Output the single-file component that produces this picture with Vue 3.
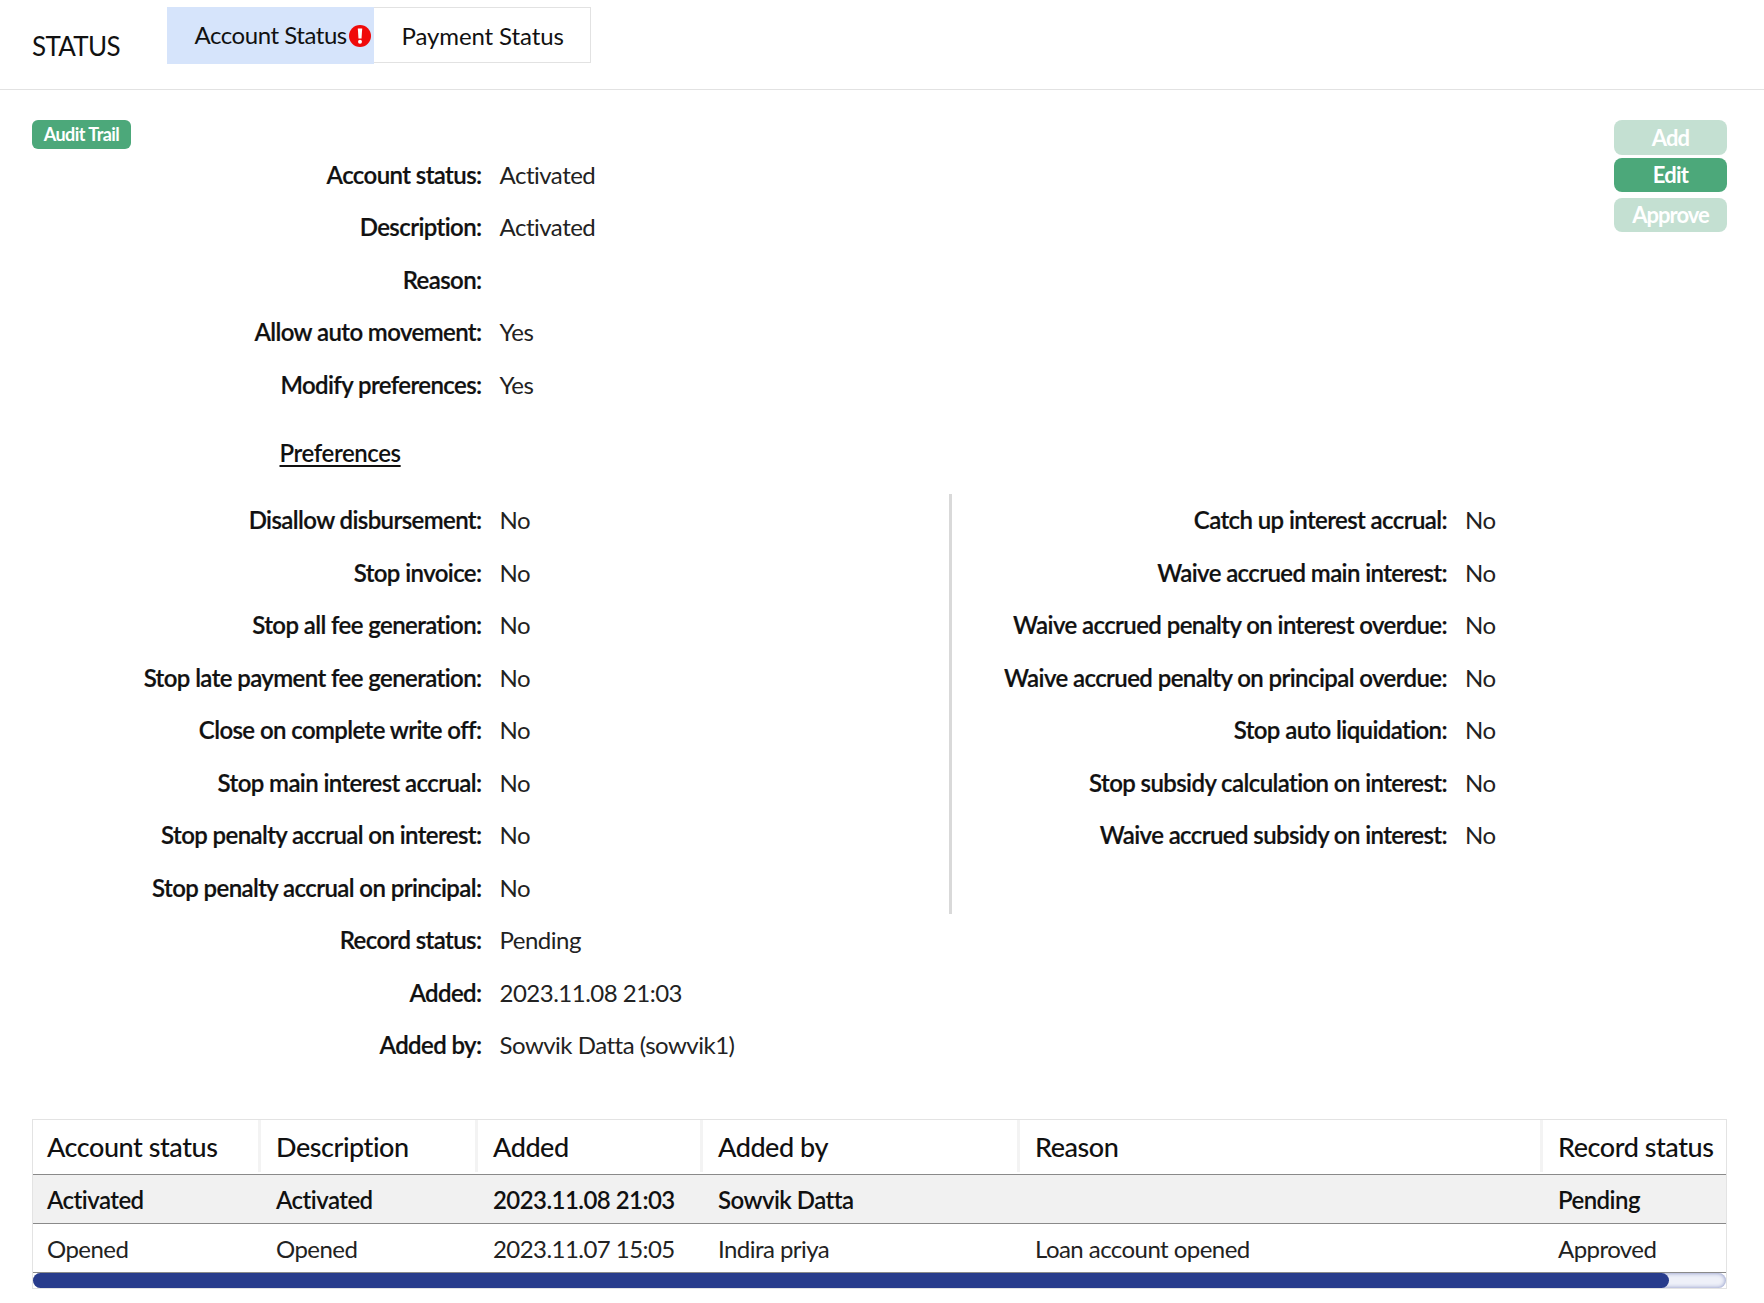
<script setup>
const top = [
  ['Account status:', 'Activated'],
  ['Description:', 'Activated'],
  ['Reason:', ''],
  ['Allow auto movement:', 'Yes'],
  ['Modify preferences:', 'Yes'],
]
const left = ['Disallow disbursement:', 'Stop invoice:', 'Stop all fee generation:', 'Stop late payment fee generation:', 'Close on complete write off:', 'Stop main interest accrual:', 'Stop penalty accrual on interest:', 'Stop penalty accrual on principal:']
const right = ['Catch up interest accrual:', 'Waive accrued main interest:', 'Waive accrued penalty on interest overdue:', 'Waive accrued penalty on principal overdue:', 'Stop auto liquidation:', 'Stop subsidy calculation on interest:', 'Waive accrued subsidy on interest:']
const bottom = [
  ['Record status:', 'Pending'],
  ['Added:', '2023.11.08 21:03'],
  ['Added by:', 'Sowvik Datta (sowvik1)'],
]
const cols = ['Account status', 'Description', 'Added', 'Added by', 'Reason', 'Record status']
const rows = [
  ['Activated', 'Activated', '2023.11.08 21:03', 'Sowvik Datta', '', 'Pending'],
  ['Opened', 'Opened', '2023.11.07 15:05', 'Indira priya', 'Loan account opened', 'Approved'],
]
</script>

<template>
  <div class="page">
    <header class="head">
      <h1 class="title">STATUS</h1>
      <nav class="tabs">
        <div class="tab active">
          <span class="tab-text">Account Status</span>
          <svg class="alert" viewBox="0 0 22 22" width="22" height="22">
            <circle cx="11" cy="11" r="11" fill="#f00a0a" />
            <path d="M8.8 3.5h4.4l-.7 10h-3z" fill="#fff" />
            <circle cx="11" cy="16.8" r="2" fill="#fff" />
          </svg>
        </div>
        <div class="tab"><span class="tab-text">Payment Status</span></div>
      </nav>
    </header>

    <main class="body">
      <section class="content">
        <div class="main">
          <button class="audit">Audit Trail</button>
          <div class="form">
            <div v-for="r in top" :key="r[0]" class="row">
              <label class="lab">{{ r[0] }}</label><span class="val">{{ r[1] }}</span>
            </div>
            <div class="prefs"><span>Preferences</span></div>
            <div class="split">
              <div class="col-left">
                <div v-for="l in left" :key="l" class="row">
                  <label class="lab">{{ l }}</label><span class="val">No</span>
                </div>
              </div>
              <div class="col-right">
                <div v-for="l in right" :key="l" class="row">
                  <label class="lab">{{ l }}</label><span class="val">No</span>
                </div>
              </div>
            </div>
            <div v-for="r in bottom" :key="r[0]" class="row">
              <label class="lab">{{ r[0] }}</label><span class="val">{{ r[1] }}</span>
            </div>
          </div>
        </div>
        <aside class="actions">
          <button class="btn off add">Add</button>
          <button class="btn edit">Edit</button>
          <button class="btn off approve">Approve</button>
        </aside>
      </section>

      <div class="table-wrap">
        <table class="grid">
          <colgroup>
            <col class="c1" /><col class="c2" /><col class="c3" />
            <col class="c4" /><col class="c5" /><col />
          </colgroup>
          <thead>
            <tr><th v-for="c in cols" :key="c"><span class="th-in">{{ c }}</span></th></tr>
          </thead>
          <tbody>
            <tr v-for="(r, i) in rows" :key="i" :class="{ sel: i === 0 }">
              <td v-for="(c, j) in r" :key="j">{{ c }}</td>
            </tr>
          </tbody>
        </table>
        <div class="track"><div class="thumb"></div></div>
      </div>
    </main>
  </div>
</template>

<style>
html, body { margin: 0; background: #fff; }
</style>

<style scoped>
.page {
  width: 1764px;
  height: 1303px;
  font-family: "Lato", "Noto Sans", sans-serif;
  color: #111;
  font-size: 24px;
  overflow: hidden;
  box-sizing: border-box;
}
.head {
  height: 89px;
  border-bottom: 1px solid #e2e2e2;
  display: flex;
  align-items: flex-start;
  padding-left: 32px;
}
.title {
  margin: 0;
  width: 134.5px;
  padding-top: 30px;
  font-size: 26px;
  line-height: 32px;
  font-weight: 400;
  letter-spacing: -0.7px;
}
.tabs { display: flex; margin-top: 7px; align-items: flex-start; }
.tab {
  height: 56px;
  width: 217px;
  box-sizing: border-box;
  border: 1px solid #e2e2e2;
  border-left: 0;
  display: flex;
  align-items: center;
  padding-left: 28px;
  font-size: 24px;
}
.tab-text { white-space: nowrap; letter-spacing: -0.1px; }
.tab.active {
  width: 207px;
  height: 57px;
  background: #d6e4fb;
  border: 0;
  padding-left: 28px;
  gap: 2px;
  padding-bottom: 2px;
}
.tab.active .tab-text { letter-spacing: -0.45px; }
.alert { flex: none; margin-top: 2px; }
.body { padding: 30px 37px 0 32px; }
.content { display: flex; justify-content: space-between; }
.main { flex: 1; }
.audit {
  display: block;
  width: 99px;
  height: 29px;
  padding: 0;
  border: 0;
  border-radius: 6px;
  background: #4ca87a;
  color: #fff;
  font: 700 18px/29px "Lato", sans-serif;
  letter-spacing: -0.55px;
}
.form { margin-top: -1px; }
.row {
  display: flex;
  height: 52.5px;
  align-items: center;
}
.lab {
  width: 449.5px;
  flex: none;
  text-align: right;
  font-weight: 600;
  -webkit-text-stroke: 0.2px #111;
  letter-spacing: -0.6px;
  white-space: nowrap;
}
.val { margin-left: 18px; color: #222; white-space: nowrap; letter-spacing: -0.5px; }
.prefs {
  height: 68px;
  padding-left: 247.5px;
  display: flex;
  align-items: center;
  padding-top: 15px;
  box-sizing: border-box;
  font-weight: 600;
  letter-spacing: -0.4px;
  text-decoration: underline;
  text-underline-offset: 3px;
}
.split { display: flex; margin-top: 15px; }
.col-left {
  width: 920px;
  flex: none;
  box-sizing: border-box;
  border-right: 3px solid #d9d9d9;
  height: 420px;
}
.col-right .lab { width: 495px; }
.actions {
  width: 113px;
  flex: none;
  display: flex;
  flex-direction: column;
}
.btn {
  height: 34px;
  padding: 0;
  border: 0;
  border-radius: 8px;
  color: #fff;
  background: #4ca87a;
  font: 700 22px/34px "Lato", sans-serif;
  letter-spacing: -0.8px;
}
.btn.off { background: #c4e0d2; }
.add { height: 35px; }
.edit { margin-top: 3px; }
.approve { margin-top: 6px; letter-spacing: -1px; }
.table-wrap {
  margin-top: 48px;
  width: 1695px;
  box-sizing: border-box;
  border: 1px solid #e3e3e3;
}
.grid {
  width: 100%;
  table-layout: fixed;
  border-collapse: collapse;
}
.c1 { width: 225px; }
.c2 { width: 217px; }
.c3 { width: 225px; }
.c4 { width: 317px; }
.c5 { width: 523px; }
th {
  height: 54px;
  padding: 0 0 2px;
  text-align: left;
  font-weight: 500;
  font-size: 27px;
  letter-spacing: -0.45px;
  border-bottom: 1px solid #8a8a8a;
  box-sizing: border-box;
  vertical-align: top;
}
.th-in {
  display: block;
  height: 52px;
  line-height: 54px;
  padding-left: 15px;
  border-left: 3px solid #f3f3f3;
  white-space: nowrap;
}
th:first-child .th-in { border-left: 0; padding-left: 14px; }
td {
  height: 49px;
  padding: 0 0 0 18px;
  box-sizing: border-box;
  border-bottom: 1px solid #8a8a8a;
  color: #222;
  white-space: nowrap;
  letter-spacing: -0.55px;
}
td:first-child { padding-left: 14px; }
.sel td { background: #f1f1f1; font-weight: 600; color: #111; }
.track {
  height: 15px;
  border-radius: 8px;
  box-shadow: inset 0 0 4px #7f8bc0;
  background: #eef0f8;
}
.thumb {
  width: 1636px;
  height: 15px;
  border-radius: 8px;
  background: #283c8c;
}
</style>
